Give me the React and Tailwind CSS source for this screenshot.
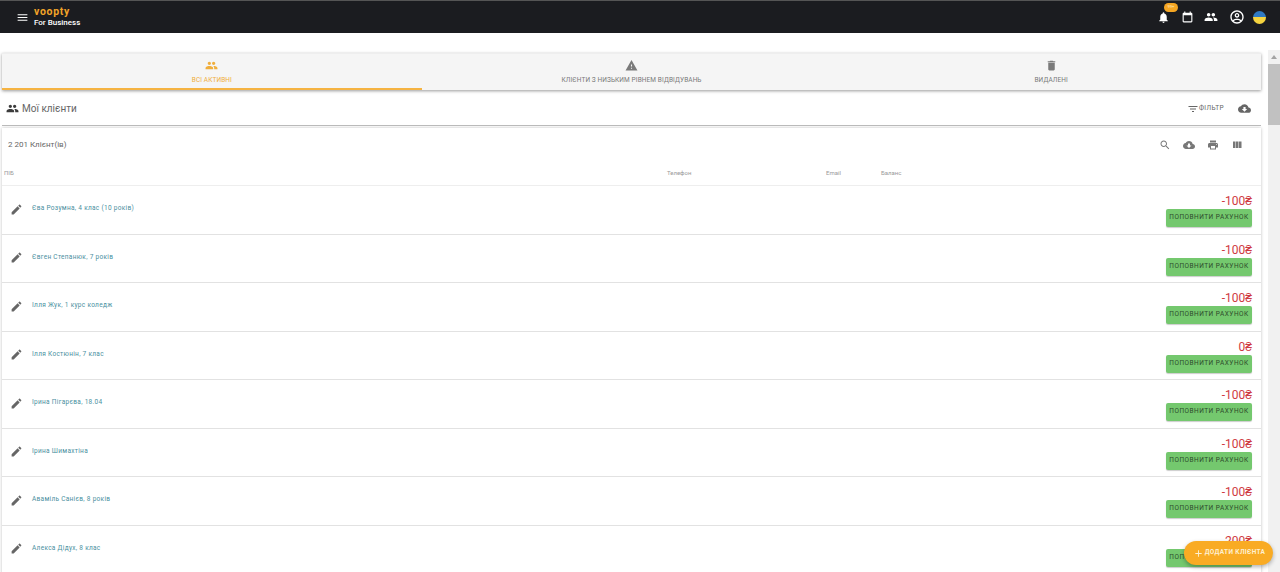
import React from 'react';

const paths = {
    menu: "M3 18h18v-2H3v2zm0-5h18v-2H3v2zm0-7v2h18V6H3z",
    people: "M16 11c1.66 0 2.99-1.34 2.99-3S17.66 5 16 5c-1.66 0-3 1.34-3 3s1.34 3 3 3zm-8 0c1.66 0 2.99-1.34 2.99-3S9.66 5 8 5C6.34 5 5 6.34 5 8s1.34 3 3 3zm0 2c-2.33 0-7 1.17-7 3.5V19h14v-2.5c0-2.33-4.67-3.5-7-3.5zm8 0c-.29 0-.62.02-.97.05 1.16.84 1.97 1.97 1.97 3.45V19h6v-2.5c0-2.33-4.67-3.5-7-3.5z",
    warning: "M1 21h22L12 2 1 21zm12-3h-2v-2h2v2zm0-4h-2v-4h2v4z",
    trash: "M6 19c0 1.1.9 2 2 2h8c1.1 0 2-.9 2-2V7H6v12zM19 4h-3.5l-1-1h-5l-1 1H5v2h14V4z",
    filter: "M10 18h4v-2h-4v2zM3 6v2h18V6H3zm3 7h12v-2H6v2z",
    cloud: "M19.35 10.04C18.67 6.59 15.64 4 12 4 9.11 4 6.6 5.64 5.35 8.04 2.34 8.36 0 10.91 0 14c0 3.31 2.69 6 6 6h13c2.76 0 5-2.24 5-5 0-2.64-2.05-4.78-4.65-4.96zM17 13l-5 5-5-5h3V9h4v4h3z",
    search: "M15.5 14h-.79l-.28-.27C15.41 12.59 16 11.11 16 9.5 16 5.91 13.09 3 9.5 3S3 5.91 3 9.5 5.91 16 9.5 16c1.61 0 3.09-.59 4.23-1.57l.27.28v.79l5 4.99L20.49 19l-4.99-5zm-6 0C7.01 14 5 11.99 5 9.5S7.01 5 9.5 5 14 7.01 14 9.5 11.99 14 9.5 14z",
    print: "M19 8H5c-1.66 0-3 1.34-3 3v6h4v4h12v-4h4v-6c0-1.66-1.34-3-3-3zm-3 11H8v-5h8v5zm3-7c-.55 0-1-.45-1-1s.45-1 1-1 1 .45 1 1-.45 1-1 1zm-1-9H6v4h12V3z",
    columns: "M10 18h5V5h-5v13zm-6 0h5V5H4v13zM16 5v13h5V5h-5z",
    edit: "M3 17.25V21h3.75L17.81 9.94l-3.75-3.75L3 17.25zM20.71 7.04c.39-.39.39-1.02 0-1.41l-2.34-2.34c-.39-.39-1.02-.39-1.41 0l-1.83 1.83 3.75 3.75 1.83-1.83z",
    bell: "M12 22c1.1 0 2-.9 2-2h-4c0 1.1.89 2 2 2zm6-6v-5c0-3.07-1.64-5.64-4.5-6.32V4c0-.83-.67-1.5-1.5-1.5s-1.5.67-1.5 1.5v.68C7.63 5.36 6 7.92 6 11v5l-2 2v1h16v-1l-2-2z",
    account: "M12 2C6.48 2 2 6.48 2 12s4.48 10 10 10 10-4.48 10-10S17.52 2 12 2zM7.07 18.28c.43-.9 3.05-1.78 4.93-1.78s4.51.88 4.93 1.78C15.57 19.36 13.86 20 12 20s-3.57-.64-4.93-1.72zm11.29-1.45c-1.43-1.74-4.9-2.33-6.36-2.33s-4.93.59-6.36 2.33C4.62 15.49 4 13.82 4 12c0-4.41 3.59-8 8-8s8 3.59 8 8c0 1.82-.62 3.49-1.64 4.83zM12 6c-1.94 0-3.5 1.56-3.5 3.5S10.06 13 12 13s3.5-1.56 3.5-3.5S13.94 6 12 6zm0 5c-.83 0-1.5-.67-1.5-1.5S11.17 8 12 8s1.5.67 1.5 1.5S12.83 11 12 11z",
    calendar: "M19 3h-1V1h-2v2H8V1H6v2H5c-1.1 0-2 .9-2 2v14c0 1.1.9 2 2 2h14c1.1 0 2-.9 2-2V5c0-1.1-.9-2-2-2zm0 16H5V8h14v11z",
    plus: "M19 13h-6v6h-2v-6H5v-2h6V5h2v6h6v2z",
};

const Icon = ({ name, className }) => (
    <svg viewBox="0 0 24 24" fill="currentColor" className={className}>
        <path d={paths[name]} />
    </svg>
);

const clients = [
    { name: "Єва Розумна, 4 клас (10 років)", balance: "-100₴" },
    { name: "Євген Степанюк, 7 років", balance: "-100₴" },
    { name: "Ілля Жук, 1 курс коледж", balance: "-100₴" },
    { name: "Ілля Костюнін, 7 клас", balance: "0₴" },
    { name: "Ірина Пігарєва, 18.04", balance: "-100₴" },
    { name: "Ірина Шимахтіна", balance: "-100₴" },
    { name: "Аваміль Санієв, 8 років", balance: "-100₴" },
    { name: "Алекса Дідух, 8 клас", balance: "-200₴" },
];

const tabs = [
    { icon: "people", label: "ВСІ АКТИВНІ", active: true },
    { icon: "warning", label: "КЛІЄНТИ З НИЗЬКИМ РІВНЕМ ВІДВІДУВАНЬ" },
    { icon: "trash", label: "ВИДАЛЕНІ" },
];

const App = () => {
    return (
        <div className="relative flex h-[572px] w-[1280px] flex-col overflow-hidden bg-white font-['Roboto',sans-serif]">
            <header className="flex h-[33px] shrink-0 items-center justify-between border-t border-t-[#555] bg-[#1b1c20] pr-[14px] shadow-[0_1px_3px_rgba(0,0,0,0.35)]">
                <div className="flex items-center">
                    <Icon name="menu" className="ml-[16px] h-[13px] w-[13px] text-white" />
                    <div className="ml-[5px] flex flex-col">
                        <span className="text-[10.5px] leading-[11px] font-bold tracking-[0.7px] text-[#f2a428]">voopty</span>
                        <span className="text-[8px] leading-[11px] font-medium text-white">For Business</span>
                    </div>
                </div>
                <div className="flex items-center">
                    <div className="relative">
                        <Icon name="bell" className="h-[13px] w-[13px] text-white" />
                        <span className="absolute top-[-8px] left-[7px] flex h-[9px] w-[14px] items-center justify-center rounded-full bg-[#f5a623] text-[4px] text-[#fde9c4]">99+</span>
                    </div>
                    <Icon name="calendar" className="ml-[11px] h-[13px] w-[13px] text-white" />
                    <Icon name="people" className="ml-[10px] h-[14px] w-[14px] text-white" />
                    <Icon name="account" className="ml-[10.5px] h-[16px] w-[16px] text-white" />
                    <div className="ml-[8.5px] h-[13px] w-[13px] overflow-hidden rounded-full">
                        <div className="h-1/2 bg-[#2f79c2]" />
                        <div className="h-1/2 bg-[#f5d33f]" />
                    </div>
                </div>
            </header>

            <div className="h-[17px] shrink-0 bg-white" />

            <div className="flex min-h-0 flex-1">
                <main className="w-[1268px] pr-[7px] pl-[2px]">
                    <nav className="mt-[3px] flex h-[37px] border-t border-t-[#eee] bg-[#f5f5f5] shadow-[0_1px_3px_rgba(0,0,0,0.4)]">
                        {tabs.map((tab) => (
                            <div
                                key={tab.label}
                                className={`flex flex-1 flex-col items-center border-b-2 pt-[5px] ${tab.active ? "border-b-[#f5b342] text-[#f0ae3c]" : "border-b-transparent text-[#7a7a7a]"}`}
                            >
                                <Icon name={tab.icon} className="h-[13px] w-[13px]" />
                                <span className="mt-[4px] text-[6.5px] leading-[9px] tracking-[0.1px]">{tab.label}</span>
                            </div>
                        ))}
                    </nav>

                    <div className="flex h-[36px] items-center justify-between border-b border-b-[#bdbdbd] pt-[2px] pr-[10px] pl-[4px]">
                        <div className="flex items-center gap-[3px] text-[#3c3c3c]">
                            <Icon name="people" className="h-[13px] w-[13px]" />
                            <span className="text-[10px] text-[#666]">Мої клієнти</span>
                        </div>
                        <div className="flex items-center gap-[14px] text-[#666]">
                            <div className="flex items-center">
                                <Icon name="filter" className="h-[12px] w-[12px]" />
                                <span className="text-[6.5px] tracking-[0.4px]">ФІЛЬТР</span>
                            </div>
                            <Icon name="cloud" className="h-[13px] w-[13px]" />
                        </div>
                    </div>

                    <section className="mt-[2px] shadow-[0_0_3px_rgba(0,0,0,0.25)]">
                        <div className="flex h-[34px] items-center justify-between pr-[18px] pl-[6px]">
                            <span className="text-[8px] text-[#666]">2 201 Клієнт(ів)</span>
                            <div className="flex items-center gap-[12px] text-[#777]">
                                <Icon name="search" className="h-[12px] w-[12px]" />
                                <Icon name="cloud" className="h-[12px] w-[12px]" />
                                <Icon name="print" className="h-[12px] w-[12px]" />
                                <Icon name="columns" className="h-[12px] w-[12px]" />
                            </div>
                        </div>
                        <div className="grid h-[24px] grid-cols-[663px_159px_55px_1fr] items-center border-b border-b-[#eee] pb-[3px] pl-[2px] text-[6px] text-[#999]">
                            <span>ПІБ</span>
                            <span>Телефон</span>
                            <span>Email</span>
                            <span>Баланс</span>
                        </div>
                        {clients.map((client) => (
                            <div key={client.name} className="flex h-[48.5px] items-center justify-between border-b border-b-[#e2e2e2] pr-[9px] pl-[8px]">
                                <div className="mb-[1px] flex items-center">
                                    <Icon name="edit" className="h-[13px] w-[13px] text-[#666]" />
                                    <span className="ml-[9px] text-[6.5px] tracking-[0.3px] text-[#4a8fa0]">{client.name}</span>
                                </div>
                                <div className="flex flex-col items-end pt-[1px]">
                                    <span className="text-[12px] leading-[16px] text-[#cf3a42]">{client.balance}</span>
                                    <button className="h-[18px] w-[86px] rounded-[2px] bg-[#74c86e] text-[6.5px] tracking-[0.5px] text-[#2e4a2c] shadow-[0_1px_1px_rgba(0,0,0,0.2)]">
                                        ПОПОВНИТИ РАХУНОК
                                    </button>
                                </div>
                            </div>
                        ))}
                    </section>
                </main>

                <div className="flex w-[12px] flex-col bg-[#f1f1f1]">
                    <div className="flex h-[14px] items-center justify-center">
                        <div className="h-0 w-0 border-x-[3.5px] border-b-[4px] border-x-transparent border-b-[#a3a3a3]" />
                    </div>
                    <div className="h-[61px] bg-[#c1c1c1]" />
                </div>
            </div>

            <button className="absolute top-[541px] left-[1184px] flex h-[24px] w-[89px] items-center justify-center rounded-full bg-[#f9ab24] pl-[1px] text-[6.5px] font-bold tracking-[0.35px] text-[#fdf0d2] shadow-[0_2px_4px_rgba(0,0,0,0.3)]">
                <Icon name="plus" className="mr-[1px] h-[11px] w-[11px]" />
                ДОДАТИ КЛІЄНТА
            </button>
        </div>
    );
};

export default App;
